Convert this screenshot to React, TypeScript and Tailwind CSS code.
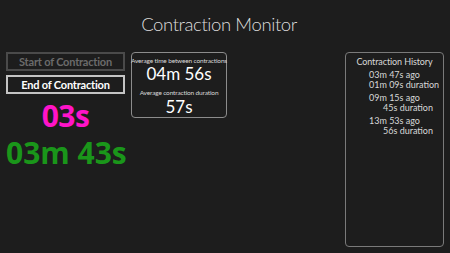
import React from "react";

const history = [
  { ago: "03m 47s ago", dur: "01m 09s duration" },
  { ago: "09m 15s ago", dur: "45s duration" },
  { ago: "13m 53s ago", dur: "56s duration" },
];

const lato = { fontFamily: 'Lato, "Open Sans", sans-serif' };

export default function App() {
  return (
    <div
      className="w-[450px] h-[253px] bg-[#1d1d1d] text-white overflow-hidden"
      style={{ fontFamily: '"Open Sans", "Noto Sans", sans-serif' }}
    >
      <div className="h-[52px] flex items-center justify-center pb-[3px] pr-[12px]">
        <div style={lato} className="text-[18.5px] font-light text-[#dcdcdc] leading-none tracking-[-0.4px]">
          Contraction Monitor
        </div>
      </div>
      <div className="flex items-start">
        <div className="ml-[6px] w-[119px] flex flex-col">
          <div style={lato} className="h-[19px] border-2 border-[#4a4a4a] flex items-center justify-center text-[11px] font-bold text-[#6b6b6b] leading-none tracking-[-0.2px]">
            Start of Contraction
          </div>
          <div style={lato} className="mt-[4px] h-[19px] border-2 border-[#c4c4c4] flex items-center justify-center text-[11px] font-bold text-white leading-none tracking-[-0.2px]">
            End of Contraction
          </div>
          <div className="mt-[4px] text-center text-[30px] font-bold leading-[36px] text-[#ff14c8] tracking-[-0.5px]">
            03s
          </div>
          <div className="mt-[1px] text-center text-[30px] font-bold leading-[36px] text-[#1a961a] tracking-[0px] whitespace-nowrap">
            03m 43s
          </div>
        </div>
        <div className="ml-[6px] w-[96px] h-[66px] rounded-[4px] border border-[#8c8c8c] flex flex-col items-center">
          <div style={lato} className="mt-[3px] text-[6.5px] leading-[9px] text-[#d8d8d8] tracking-[-0.15px] whitespace-nowrap">
            Average time between contractions
          </div>
          <div style={lato} className="-mt-[1px] text-[17px] leading-[19px] text-white">04m 56s</div>
          <div style={lato} className="mt-[5px] text-[6.5px] leading-[9px] text-[#d8d8d8] tracking-[-0.15px] whitespace-nowrap">
            Average contraction duration
          </div>
          <div style={lato} className="text-[17px] leading-[19px] text-white">57s</div>
        </div>
        <div className="ml-auto mr-[6px] w-[99px] h-[195px] rounded-[4px] border border-[#7a7a7a] flex flex-col items-center">
          <div style={lato} className="mt-[2px] text-[9px] leading-[13px] text-[#d8d8d8] whitespace-nowrap tracking-[-0.1px]">
            Contraction History
          </div>
          <div className="mt-[2px] ml-[13px] w-[64px] flex flex-col gap-[4px]">
            {history.map((h) => (
              <div key={h.ago} style={lato} className="flex flex-col text-[9px] leading-[9.5px] text-[#d8d8d8]">
                <div className="text-left whitespace-nowrap">{h.ago}</div>
                <div className="text-right whitespace-nowrap">{h.dur}</div>
              </div>
            ))}
          </div>
        </div>
      </div>
    </div>
  );
}
